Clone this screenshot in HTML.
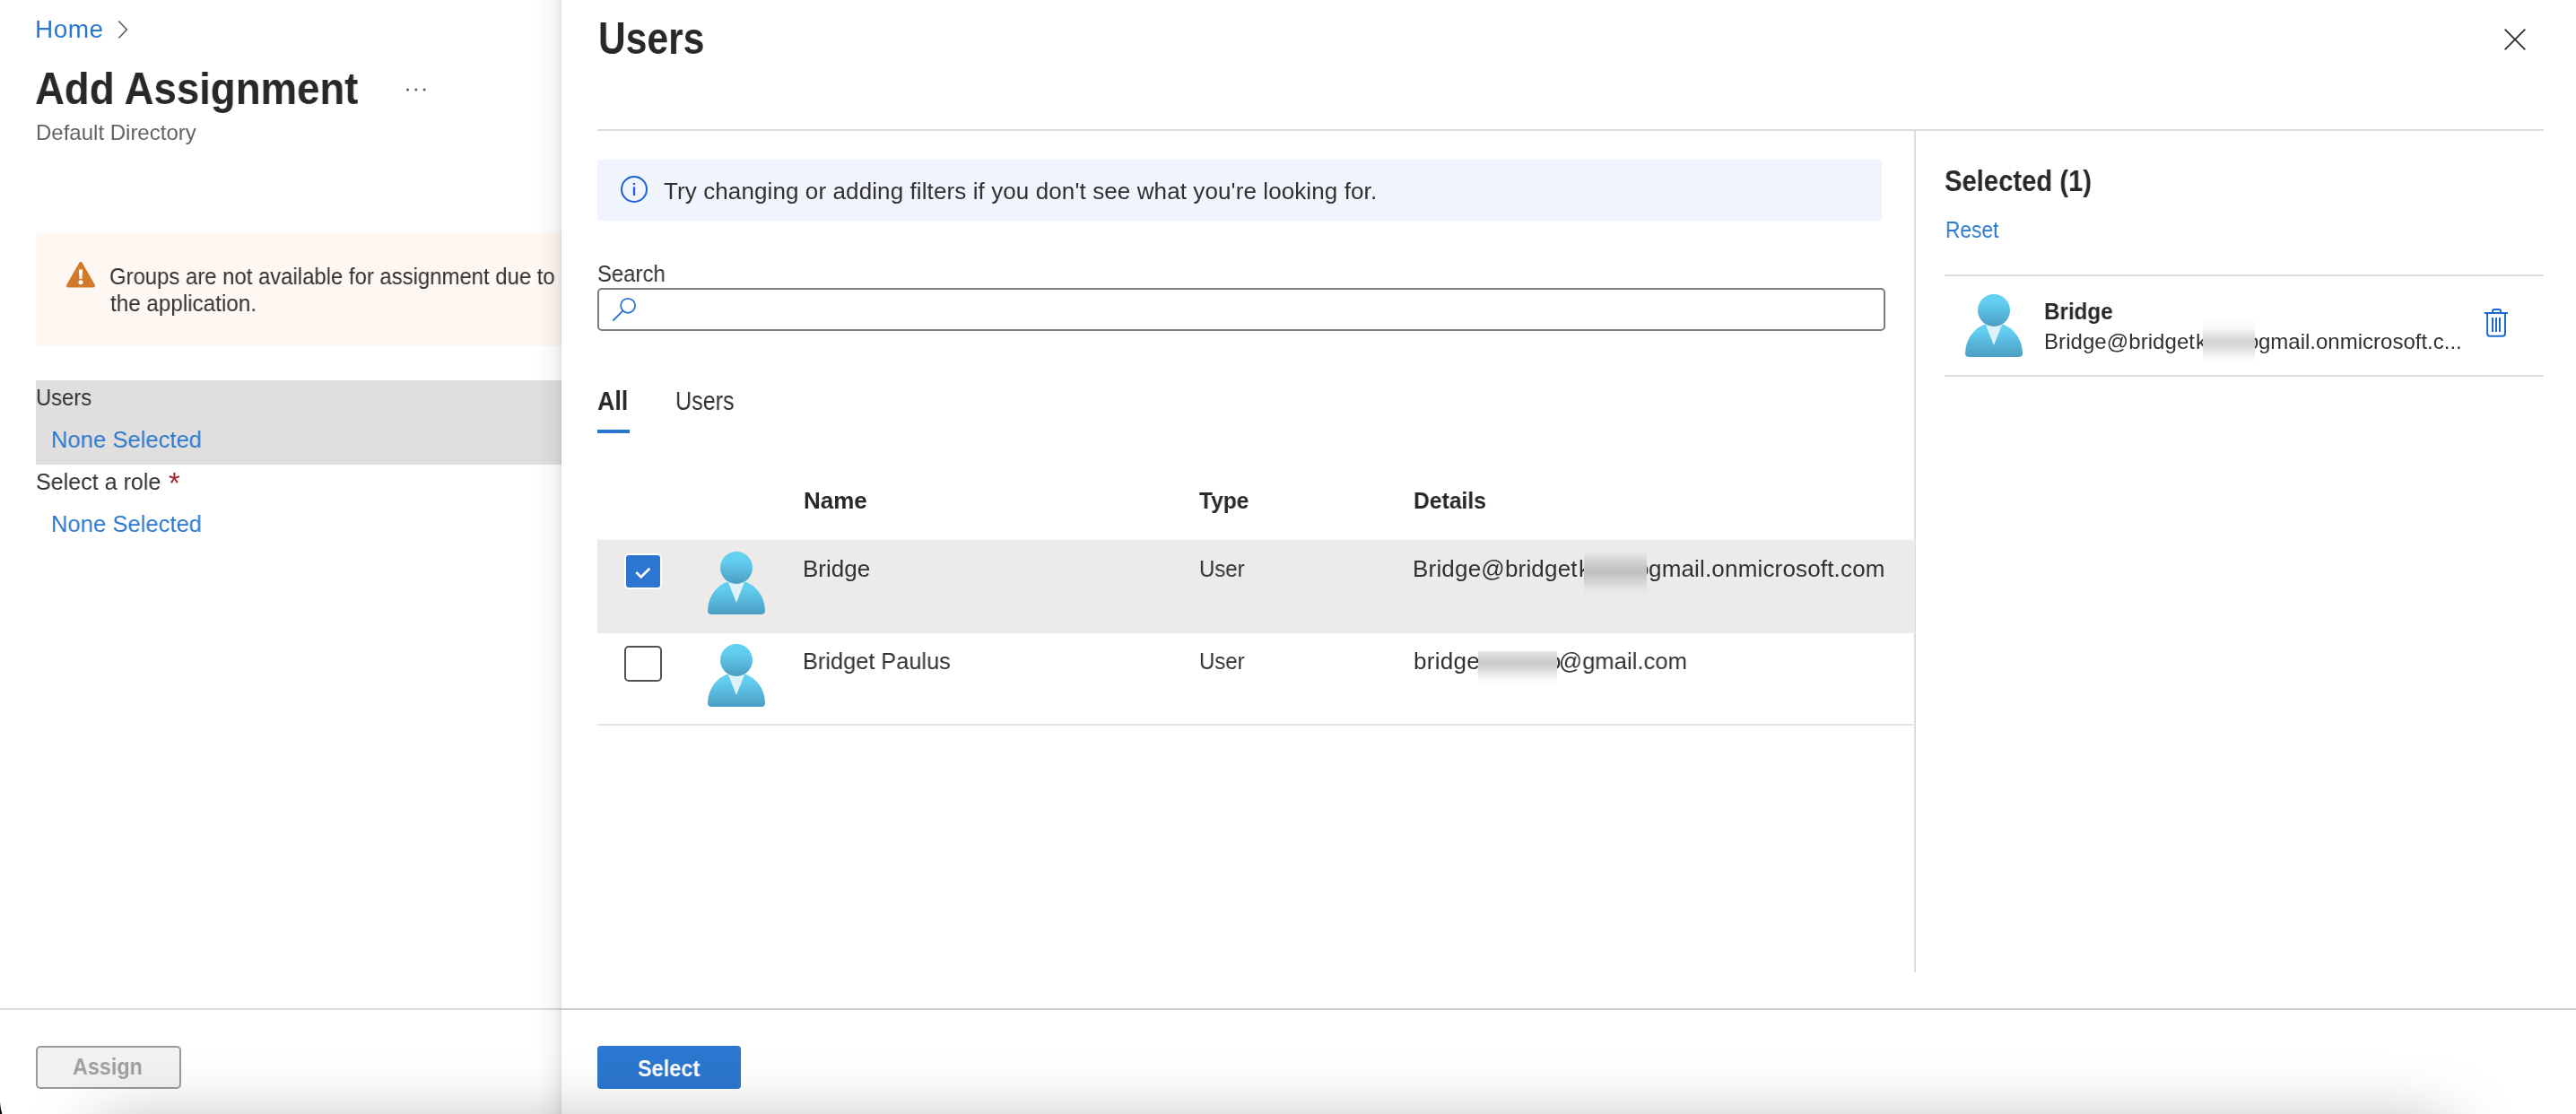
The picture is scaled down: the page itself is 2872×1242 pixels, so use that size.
<!DOCTYPE html>
<html><head><meta charset="utf-8"><title>Users</title><style>
*{margin:0;padding:0;box-sizing:border-box}
html,body{width:2872px;height:1242px;overflow:hidden;background:#fff}
body{position:relative;font-family:"Liberation Sans",sans-serif}
.t{position:absolute;white-space:nowrap;line-height:1;font-family:"Liberation Sans",sans-serif;will-change:transform;transform-origin:0 0}
.a{position:absolute;display:block}
.b{position:absolute}
#left{position:absolute;left:0;top:0;width:626px;height:1242px;overflow:hidden}
#shadow{position:absolute;left:592px;top:0;width:34px;height:1242px;background:linear-gradient(to right,rgba(0,0,0,0) 0%,rgba(0,0,0,.009) 30%,rgba(0,0,0,.024) 55%,rgba(0,0,0,.045) 78%,rgba(0,0,0,.078) 93%,rgba(0,0,0,.13) 100%)}
#right{position:absolute;left:626px;top:0;width:2246px;height:1242px;background:#fff}
</style></head><body>
<div id="left">

<div class="b" style="left:0;top:1124px;width:626px;height:2px;background:#dedcda"></div>
<div class="b" style="left:40px;top:258.5px;width:600px;height:127px;background:#fef7f2;border-radius:4px"></div>
<div class="b" style="left:40px;top:424px;width:600px;height:93.5px;background:#e1dfdd"></div>
<svg class="a" style="left:128px;top:20px" width="20" height="26" viewBox="0 0 20 26"><path d="M4.300 3.500L13.400 13L4.300 22.500" fill="none" stroke="#5f5e5c" stroke-width="1.600"/></svg>
<svg class="a" style="left:450px;top:96px" width="30" height="8" viewBox="0 0 30 8"><circle cx="4.500" cy="4" r="1.500" fill="#605e5c"/><circle cx="13.800" cy="4" r="1.500" fill="#605e5c"/><circle cx="23.100" cy="4" r="1.500" fill="#605e5c"/></svg>
<svg class="a" style="left:70px;top:288px" width="40" height="36" viewBox="0 0 40 36"><path d="M18.300 5.100Q20 2.300 21.700 5.100L35.600 29.300Q37 32.600 33.600 32.600L6.400 32.600Q3 32.600 4.400 29.300Z" fill="#d27a2b"/><path d="M17.800 12.400L22.200 12.400L21.400 23.100L18.600 23.100Z" fill="#fff"/><circle cx="20" cy="26.700" r="2.500" fill="#fff"/></svg>

<div class="t" id="home" style="left:39.2px;top:19px;font-size:28px;color:#2b78d0;letter-spacing:0.467px;">Home</div>
<div class="t" id="title" style="left:39.2px;top:74px;font-size:50px;color:#292827;transform:scaleX(0.9114);font-weight:bold;">Add Assignment</div>
<div class="t" id="sub" style="left:39.9px;top:136px;font-size:24px;color:#646464;">Default Directory</div>
<div class="t" id="w1" style="left:121.6px;top:295px;font-size:26px;color:#323130;transform:scaleX(0.9189);">Groups are not available for assignment due to</div>
<div class="t" id="w2" style="left:123px;top:325px;font-size:26px;color:#323130;transform:scaleX(0.9318);">the application.</div>
<div class="t" id="lu" style="left:40px;top:430px;font-size:26px;color:#323130;transform:scaleX(0.9143);">Users</div>
<div class="t" id="ns1" style="left:57.4px;top:477px;font-size:26px;color:#2b78d0;transform:scaleX(0.9850);">None Selected</div>
<div class="t" id="sr" style="left:40px;top:524px;font-size:26px;color:#323130;transform:scaleX(0.9643);">Select a role</div>
<div class="t" id="ast" style="left:188.4px;top:522px;font-size:33px;color:#a4262c;">*</div>
<div class="t" id="ns2" style="left:57.4px;top:571px;font-size:26px;color:#2b78d0;transform:scaleX(0.9850);">None Selected</div>
</div>
<div id="shadow"></div>
<div id="right"></div>

<div class="b" style="left:626px;top:1124px;width:2246px;height:2px;background:#cecece"></div>

<div class="b" style="left:40.2px;top:1166px;width:161.7px;height:47.8px;border:2px solid #9c9a97;border-radius:5px;background:#f3f2f1"></div>

<div class="t" id="assign" style="left:81.2px;top:1176px;font-size:26px;color:#a19f9d;transform:scaleX(0.8977);font-weight:bold;">Assign</div>

<div class="b" style="left:666px;top:144px;width:2170px;height:2px;background:#dcdcdc"></div>
<div class="b" style="left:2134px;top:146px;width:2px;height:937.5px;background:#dcdcdc"></div>
<div class="b" style="left:666px;top:178px;width:1432px;height:67.6px;background:#eff4fd"></div>
<svg class="a" style="left:690px;top:194px" width="34" height="34" viewBox="0 0 34 34"><circle cx="17" cy="17" r="14" fill="none" stroke="#1c5fd6" stroke-width="2"/><rect x="15.850" y="10" width="2.300" height="2.200" fill="#1c5fd6"/><rect x="15.850" y="14.300" width="2.300" height="9.700" fill="#1c5fd6"/></svg>
<div class="b" style="left:666.2px;top:321.2px;width:1435.6px;height:47.5px;border:2px solid #7d7d7d;border-radius:5px;background:#fff"></div>
<svg class="a" style="left:680px;top:328px" width="34" height="34" viewBox="0 0 34 34"><circle cx="20.100" cy="12.800" r="8" fill="none" stroke="#2b74d1" stroke-width="1.800"/><path d="M14.300 18.700L3.400 29.500" stroke="#2b74d1" stroke-width="1.800" fill="none"/></svg>
<div class="b" style="left:666px;top:479px;width:36px;height:4.4px;background:#2574d0"></div>
<div class="b" style="left:666px;top:601px;width:1468.5px;height:104.6px;background:#edebe9"></div>
<div class="b" style="left:666px;top:601px;width:1468.5px;height:2px;background:#f1f0ef"></div>
<div class="b" style="left:666px;top:806.5px;width:1468.5px;height:2px;background:#e6e5e4"></div>
<div class="b" style="left:696.3px;top:617.3px;width:41.3px;height:39.5px;background:#fff;border-radius:5px"></div>
<div class="b" style="left:698px;top:619px;width:38.1px;height:36px;background:#2c75d0;border-radius:3px"></div>
<svg class="a" style="left:700px;top:625px" width="34" height="28" viewBox="0 0 34 28"><path d="M9.300 13L14.700 18.400L24.300 8.700" fill="none" stroke="#fff" stroke-width="2.700"/></svg>
<div class="b" style="left:696px;top:720px;width:42px;height:40px;border:2px solid #555352;border-radius:5px;background:#fff"></div>
<svg class="a" style="left:789px;top:615px" width="64" height="70" viewBox="0 0 64 70"><defs><linearGradient id="g1" x1="0" y1="0" x2="0" y2="1"><stop offset="0" stop-color="#64d2f3"/><stop offset="0.25" stop-color="#62cdef"/><stop offset="1" stop-color="#4b9dc3"/></linearGradient><linearGradient id="h1" x1="0" y1="0" x2="0" y2="1"><stop offset="0" stop-color="#64d2f3"/><stop offset="0.3" stop-color="#62cdef"/><stop offset="1" stop-color="#4b9dc3"/></linearGradient></defs><path d="M0 66A32 34 0 0 1 64 66Q64 70 59.5 70L4.500 70Q0 70 0 66Z" fill="url(#g1)"/><path d="M21.300 30L42.700 30L32 57.100Z" fill="#def2fa"/><circle cx="32" cy="17.900" r="18" fill="url(#h1)"/></svg>
<svg class="a" style="left:789px;top:718px" width="64" height="70" viewBox="0 0 64 70"><defs><linearGradient id="g2" x1="0" y1="0" x2="0" y2="1"><stop offset="0" stop-color="#64d2f3"/><stop offset="0.25" stop-color="#62cdef"/><stop offset="1" stop-color="#4b9dc3"/></linearGradient><linearGradient id="h2" x1="0" y1="0" x2="0" y2="1"><stop offset="0" stop-color="#64d2f3"/><stop offset="0.3" stop-color="#62cdef"/><stop offset="1" stop-color="#4b9dc3"/></linearGradient></defs><path d="M0 66A32 34 0 0 1 64 66Q64 70 59.5 70L4.500 70Q0 70 0 66Z" fill="url(#g2)"/><path d="M21.300 30L42.700 30L32 57.100Z" fill="#def2fa"/><circle cx="32" cy="17.900" r="18" fill="url(#h2)"/></svg>
<div class="b" style="left:2168px;top:305.5px;width:668px;height:2px;background:#dcdcdc"></div>
<div class="b" style="left:2168px;top:417.7px;width:668px;height:2px;background:#dcdcdc"></div>
<svg class="a" style="left:2190.8px;top:327.8px" width="64" height="70" viewBox="0 0 64 70"><defs><linearGradient id="g3" x1="0" y1="0" x2="0" y2="1"><stop offset="0" stop-color="#64d2f3"/><stop offset="0.25" stop-color="#62cdef"/><stop offset="1" stop-color="#4b9dc3"/></linearGradient><linearGradient id="h3" x1="0" y1="0" x2="0" y2="1"><stop offset="0" stop-color="#64d2f3"/><stop offset="0.3" stop-color="#62cdef"/><stop offset="1" stop-color="#4b9dc3"/></linearGradient></defs><path d="M0 66A32 34 0 0 1 64 66Q64 70 59.5 70L4.500 70Q0 70 0 66Z" fill="url(#g3)"/><path d="M21.300 30L42.700 30L32 57.100Z" fill="#def2fa"/><circle cx="32" cy="17.900" r="18" fill="url(#h3)"/></svg>
<svg class="a" style="left:2766px;top:340px" width="34" height="40" viewBox="0 0 34 40"><g fill="none" stroke="#1a6ccc" stroke-width="2"><path d="M3.900 9L30 9"/><path d="M13 8.500L13 7Q13 5 15 5L20 5Q22 5 22 7L22 8.500"/><path d="M7.100 9.500L7.100 31.800Q7.100 34.800 10.100 34.800L24 34.800Q27 34.800 27 31.800L27 9.500"/><path d="M13 14L13 30M17 14L17 30M21 14L21 30"/></g></svg>
<svg class="a" style="left:2786px;top:26px" width="36" height="36" viewBox="0 0 36 36"><path d="M6.700 6.700L29.300 29.300M29.300 6.700L6.700 29.300" stroke="#323130" stroke-width="1.900" fill="none"/></svg>
<div class="b" style="left:666px;top:1166px;width:160px;height:47.8px;background:#2c77cf;border-radius:4px"></div>

<div class="t" id="ptitle" style="left:667.2px;top:18px;font-size:50px;color:#292827;transform:scaleX(0.8508);font-weight:bold;">Users</div>
<div class="t" id="info" style="left:740.4px;top:200px;font-size:26px;color:#323130;letter-spacing:0.101px;">Try changing or adding filters if you don't see what you're looking for.</div>
<div class="t" id="search" style="left:666.4px;top:292px;font-size:26px;color:#323130;transform:scaleX(0.9187);">Search</div>
<div class="t" id="all" style="left:666px;top:433px;font-size:29px;color:#292827;transform:scaleX(0.9241);font-weight:bold;">All</div>
<div class="t" id="tusers" style="left:752.8px;top:433px;font-size:29px;color:#323130;transform:scaleX(0.8660);">Users</div>
<div class="t" id="hname" style="left:896.2px;top:545px;font-size:26px;color:#292827;font-weight:bold;">Name</div>
<div class="t" id="htype" style="left:1336.6px;top:545px;font-size:26px;color:#292827;transform:scaleX(0.9414);font-weight:bold;">Type</div>
<div class="t" id="hdet" style="left:1575.8px;top:545px;font-size:26px;color:#292827;transform:scaleX(0.9494);font-weight:bold;">Details</div>
<div class="t" id="r1n" style="left:895.2px;top:621px;font-size:26px;color:#323130;">Bridge</div>
<div class="t" id="r1t" style="left:1336.8px;top:621px;font-size:26px;color:#323130;transform:scaleX(0.9213);">User</div>
<div class="t" id="r1ea" style="left:1574.8px;top:621px;font-size:26px;color:#323130;letter-spacing:0.192px;">Bridge@bridget</div>
<div class="t" id="r1ek" style="left:1760.4px;top:621px;font-size:26px;color:#323130;">k</div>
<div class="t" id="r1eo" style="left:1823.6px;top:621px;font-size:26px;color:#323130;">o</div>
<div class="t" id="r1eb" style="left:1838.4px;top:621px;font-size:26px;color:#323130;letter-spacing:0.17px;">gmail.onmicrosoft.com</div>
<div class="t" id="r2n" style="left:895.2px;top:724px;font-size:26px;color:#323130;transform:scaleX(0.9747);">Bridget Paulus</div>
<div class="t" id="r2t" style="left:1336.8px;top:724px;font-size:26px;color:#323130;transform:scaleX(0.9213);">User</div>
<div class="t" id="r2ea" style="left:1576px;top:724px;font-size:26px;color:#323130;letter-spacing:0.3px;">bridge</div>
<div class="t" id="r2eo" style="left:1725.6px;top:724px;font-size:26px;color:#323130;">o</div>
<div class="t" id="r2eb" style="left:1738.2px;top:724px;font-size:26px;color:#323130;transform:scaleX(0.9866);">@gmail.com</div>
<div class="t" id="sel" style="left:2168.4px;top:185px;font-size:33px;color:#292827;transform:scaleX(0.8852);font-weight:bold;">Selected (1)</div>
<div class="t" id="reset" style="left:2169px;top:243px;font-size:26px;color:#2b78d0;transform:scaleX(0.8732);">Reset</div>
<div class="t" id="sname" style="left:2279.4px;top:334px;font-size:26px;color:#292827;transform:scaleX(0.9296);font-weight:bold;">Bridge</div>
<div class="t" id="sea" style="left:2279.4px;top:369px;font-size:24px;color:#323130;letter-spacing:0.069px;">Bridge@bridget</div>
<div class="t" id="sek" style="left:2448.4px;top:369px;font-size:24px;color:#323130;">k</div>
<div class="t" id="seo" style="left:2504.6px;top:369px;font-size:24px;color:#323130;">o</div>
<div class="t" id="seb" style="left:2518.2px;top:369px;font-size:24px;color:#323130;">gmail.onmicrosoft.c...</div>
<div class="t" id="select" style="left:711.4px;top:1178px;font-size:26px;color:#ffffff;transform:scaleX(0.9039);font-weight:bold;">Select</div>

<div class="b" style="left:1766px;top:608px;width:70px;height:57px;background:linear-gradient(to bottom,#edebe9 0%,#e9e8e6 14%,#d3d2d0 32%,#c3c2c1 48%,#c4c3c2 56%,#d6d5d3 72%,#e6e5e3 86%,#ecebe9 100%)"></div>
<div class="b" style="left:1648px;top:726px;width:88.2px;height:38px;background:linear-gradient(to bottom,#e9e9e9 0%,#dedede 10%,#cfcfcf 25%,#cccccc 36%,#d2d2d2 46%,#dddddd 58%,#efefef 73%,#fafafa 88%,#fefefe 100%)"></div>
<div class="b" style="left:2456px;top:356px;width:58px;height:47.7px;background:linear-gradient(to bottom,#fdfdfd 0%,#f8f8f8 20%,#e6e6e6 35%,#d6d6d6 48%,#d4d4d4 56%,#dedede 66%,#ececec 78%,#f8f8f8 90%,#fcfcfc 100%)"></div>

<div class="b" style="left:110px;top:1262px;width:2617px;height:120px;box-shadow:0 0 80px 0 rgba(0,0,0,.37)"></div>
<svg class="a" style="left:0;top:1226px" width="6" height="16" viewBox="0 0 6 16"><path d="M0 3Q0.500 10.500 2.400 16L0 16Z" fill="#000"/></svg>
</body></html>
